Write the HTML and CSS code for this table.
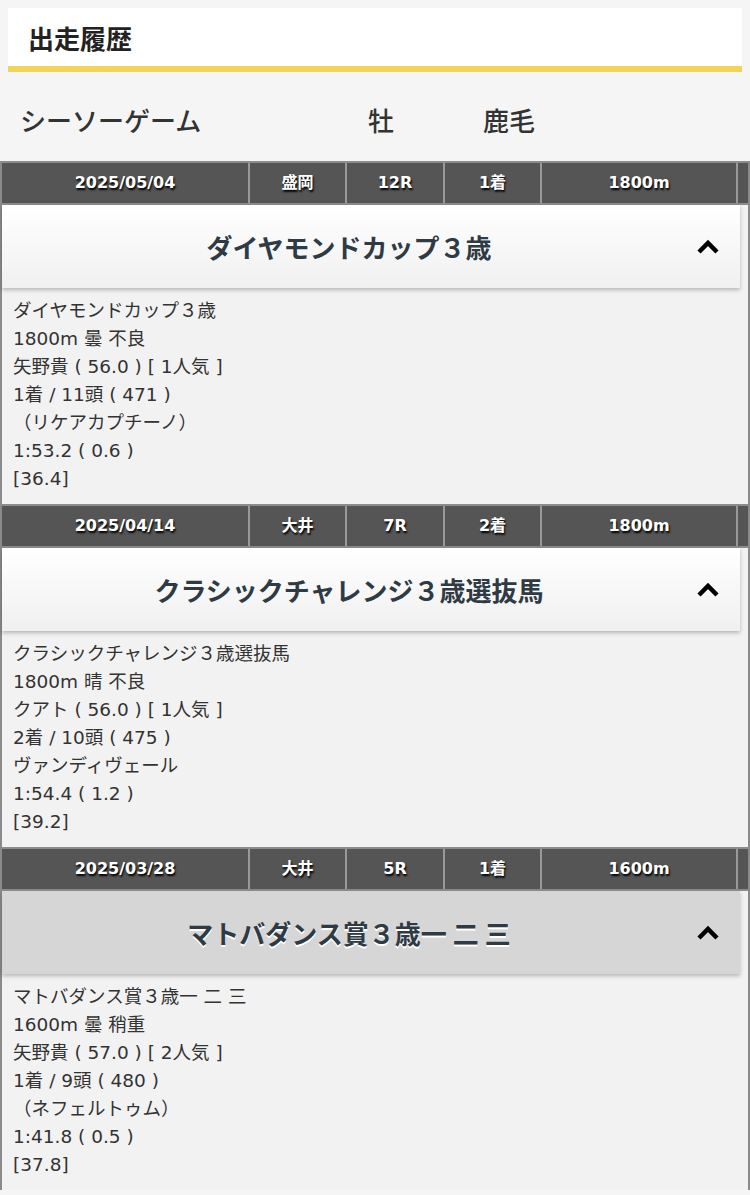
FILE: index.html
```html
<!DOCTYPE html>
<html lang="ja">
<head>
    <meta charset="UTF-8">
    <meta name="viewport" content="width=device-width, initial-scale=1.0">
    <title>出走履歴</title>
    <link rel="stylesheet" href="styles.css">
</head>
<body>

    <!-- ページタイトル -->
    <div class="page-title">
        <h2>出走履歴</h2>
    </div>

    <div class="horse">
        <span>シーソーゲーム</span>
        <span>牡</span>
        <span>鹿毛</span>
    </div>

    <div class="races">

        <div class="race-bar">
            <div>2025/05/04</div>
            <div>盛岡</div>
            <div>12R</div>
            <div>1着</div>
            <div>1800m</div>
            <div></div>
        </div>
        <div class="race-head">
            <h3>ダイヤモンドカップ３歳</h3>
            <svg class="chevron" viewBox="0 0 24 16"><polyline points="3,13 12,4 21,13"/></svg>
        </div>
        <div class="race-body">
            <p>ダイヤモンドカップ３歳</p>
            <p>1800m 曇 不良</p>
            <p>矢野貴 ( 56.0 ) [ 1人気 ]</p>
            <p>1着 / 11頭 ( 471 )</p>
            <p>（リケアカプチーノ）</p>
            <p>1:53.2 ( 0.6 )</p>
            <p>[36.4]</p>
        </div>

        <div class="race-bar">
            <div>2025/04/14</div>
            <div>大井</div>
            <div>7R</div>
            <div>2着</div>
            <div>1800m</div>
            <div></div>
        </div>
        <div class="race-head">
            <h3>クラシックチャレンジ３歳選抜馬</h3>
            <svg class="chevron" viewBox="0 0 24 16"><polyline points="3,13 12,4 21,13"/></svg>
        </div>
        <div class="race-body">
            <p>クラシックチャレンジ３歳選抜馬</p>
            <p>1800m 晴 不良</p>
            <p>クアト ( 56.0 ) [ 1人気 ]</p>
            <p>2着 / 10頭 ( 475 )</p>
            <p>ヴァンディヴェール</p>
            <p>1:54.4 ( 1.2 )</p>
            <p>[39.2]</p>
        </div>

        <div class="race-bar">
            <div>2025/03/28</div>
            <div>大井</div>
            <div>5R</div>
            <div>1着</div>
            <div>1600m</div>
            <div></div>
        </div>
        <div class="race-head active">
            <h3>マトバダンス賞３歳一 二 三</h3>
            <svg class="chevron" viewBox="0 0 24 16"><polyline points="3,13 12,4 21,13"/></svg>
        </div>
        <div class="race-body">
            <p>マトバダンス賞３歳一 二 三</p>
            <p>1600m 曇 稍重</p>
            <p>矢野貴 ( 57.0 ) [ 2人気 ]</p>
            <p>1着 / 9頭 ( 480 )</p>
            <p>（ネフェルトゥム）</p>
            <p>1:41.8 ( 0.5 )</p>
            <p>[37.8]</p>
        </div>

    </div>

</body>
</html>
```

FILE: styles.css
```css
body {
    font-family: "Noto Sans CJK JP", "Noto Sans", sans-serif;
    background-color: #f5f5f5;
    color: #333;
    margin: 0;
    padding: 0;
}
.page-title {
    margin: 8px 8px 0;
    background: white;
    border-bottom: 6px solid #f0d558;
}
.page-title h2 {
    margin: 0;
    padding: 0 20px;
    height: 58px;
    line-height: 60px;
    font-size: 26px;
    font-weight: bold;
    color: #222;
}
.horse {
    display: grid;
    grid-template-columns: 348px 115px 1fr;
    padding: 6px 0 0 20px;
    height: 83px;
    align-items: center;
    font-size: 26px;
    font-weight: 500;
    color: #333;
}
.races {
    border-left: 2px solid #8a8a8a;
    border-right: 2px solid #8a8a8a;
    background: #f2f2f2;
}
.race-bar {
    display: grid;
    grid-template-columns: 248px 97px 98px 97px 196px 1fr;
    background: #555;
    border-top: 2px solid #8c8c8c;
    border-bottom: 2px solid #8c8c8c;
    height: 40px;
}
.race-bar div {
    border-right: 2px solid #999;
    color: white;
    font-family: "DejaVu Sans", "Noto Sans CJK JP", sans-serif;
    font-size: 16px;
    font-weight: bold;
    line-height: 40px;
    text-align: center;
    text-shadow: 1px 2px 2px black;
}
.race-bar div:last-child {
    border-right: none;
}
.race-head {
    display: flex;
    align-items: center;
    height: 83px;
    margin-right: 8px;
    padding-right: 20px;
    background: linear-gradient(#ffffff, #f0f0f0);
    box-shadow: 0 2px 4px rgba(0,0,0,0.25);
}
.race-head.active {
    background: #d6d6d6;
}
.race-head h3 {
    flex: 1;
    margin: 0;
    text-align: center;
    font-size: 26px;
    font-weight: bold;
    color: #2e3a44;
}
.race-head.active h3 {
    text-shadow: 0 2px 0 white;
}
.chevron {
    width: 24px;
    height: 16px;
    fill: none;
    stroke: black;
    stroke-width: 4.5;
}
.race-body {
    padding: 9px 11px 11px;
    font-family: "DejaVu Sans", "Noto Sans CJK JP", sans-serif;
    font-size: 18.5px;
    color: #333;
}
.race-body p {
    margin: 0;
    line-height: 28px;
}
```
